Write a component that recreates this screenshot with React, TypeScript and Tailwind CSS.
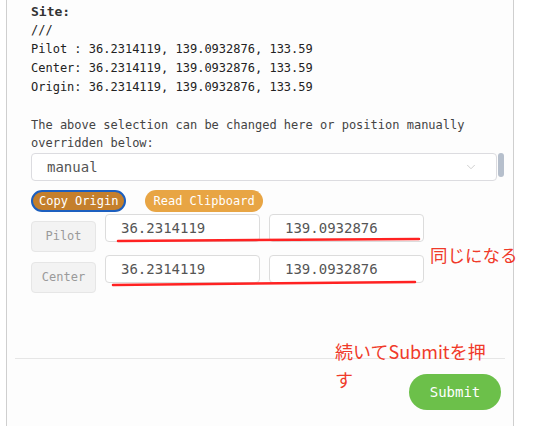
import { ChevronDown } from "lucide-react"

const mono = { fontFamily: '"DejaVu Sans Mono", "Liberation Mono", monospace' }
const jp = { fontFamily: '"Noto Sans CJK JP", sans-serif' }

function CoordRow({ label, lat, lng }: { label: string; lat: string; lng: string }) {
  return (
    <div className="flex items-start gap-[9px]">
      <div className="mt-[7px] flex h-[31px] w-[65px] items-center justify-center rounded border border-[#e6e6e6] bg-[#f3f3f3] text-[12px] text-[#9a9a9a]">
        {label}
      </div>
      <div className="flex h-[28px] w-[155px] items-center rounded border border-[#dcdcdc] bg-white pl-[15px] text-[14px] text-[#555]">
        {lat}
      </div>
      <div className="flex h-[28px] w-[155px] items-center rounded border border-[#dcdcdc] bg-white pl-[15px] text-[14px] text-[#555]">
        {lng}
      </div>
    </div>
  )
}

export default function App() {
  return (
    <div className="h-[426px] w-[535px] overflow-hidden bg-white" style={mono}>
      <div className="relative ml-[6px] h-full w-[508px] border-x border-[#cfcfcf] bg-[#fdfdfd]">
        <div className="pl-[24px] pt-[3px] text-[12px] leading-[19px] text-[#222]">
          <div className="text-[13px] font-bold leading-[18px] text-[#333]">Site:</div>
          <div>///</div>
          <div>Pilot : 36.2314119, 139.0932876, 133.59</div>
          <div>Center: 36.2314119, 139.0932876, 133.59</div>
          <div>Origin: 36.2314119, 139.0932876, 133.59</div>

          <div className="mt-[19px] leading-[18px] text-[#444]">
            The above selection can be changed here or position manually
            <br />
            overridden below:
          </div>

          <div className="mt-[1px] flex items-start gap-[1px]">
            <div className="flex h-[28px] w-[466px] items-center justify-between rounded border border-[#dcdce0] bg-white pl-[15px] pr-[18px] text-[14px] text-[#555]">
              <span>manual</span>
              <ChevronDown className="h-[14px] w-[14px] text-[#c8c8c8]" strokeWidth={1.5} />
            </div>
            <div className="h-[24px] w-[6px] rounded-sm bg-[#b6bfcc]" />
          </div>

          <div className="mt-[9px] flex items-center gap-[19px]">
            <button className="h-[22px] rounded-full border-2 border-[#1c5fbf] bg-[#c47f2c] px-[6px] text-[12px] text-white">
              Copy Origin
            </button>
            <button className="h-[22px] rounded-full bg-[#e8a544] px-[8px] text-[12px] text-white">
              Read Clipboard
            </button>
          </div>

          <div className="mt-[2px] flex flex-col gap-[3px]">
            <CoordRow label="Pilot" lat="36.2314119" lng="139.0932876" />
            <CoordRow label="Center" lat="36.2314119" lng="139.0932876" />
          </div>
        </div>

        <div className="mx-[8px] mt-[65px] border-t border-[#e6e6e6]" />

        <div className="flex justify-end pr-[12px] pt-[15px]">
          <button className="h-[36px] w-[92px] rounded-full bg-[#6cc04a] text-[14px] text-white">
            Submit
          </button>
        </div>

        {/* hand-drawn annotations over the form */}
        <svg className="pointer-events-none absolute left-0 top-0" width="508" height="426">
          <path d="M111 241 Q260 240 412 239" stroke="#f22" strokeWidth="2.5" fill="none" strokeLinecap="round" />
          <path d="M106 285 Q250 284 408 282" stroke="#f22" strokeWidth="2.5" fill="none" strokeLinecap="round" />
        </svg>

        <div className="absolute left-[423px] top-[242px] whitespace-nowrap text-[17.5px] text-[#f03a2a]" style={jp}>
          同じになる
        </div>
        <div className="absolute left-[328px] top-[337px] flex flex-col items-start text-[18px] leading-[28px] text-[#f03a2a]" style={jp}>
          <span className="whitespace-nowrap">続いてSubmitを押</span>
          <span>す</span>
        </div>
      </div>
    </div>
  )
}
